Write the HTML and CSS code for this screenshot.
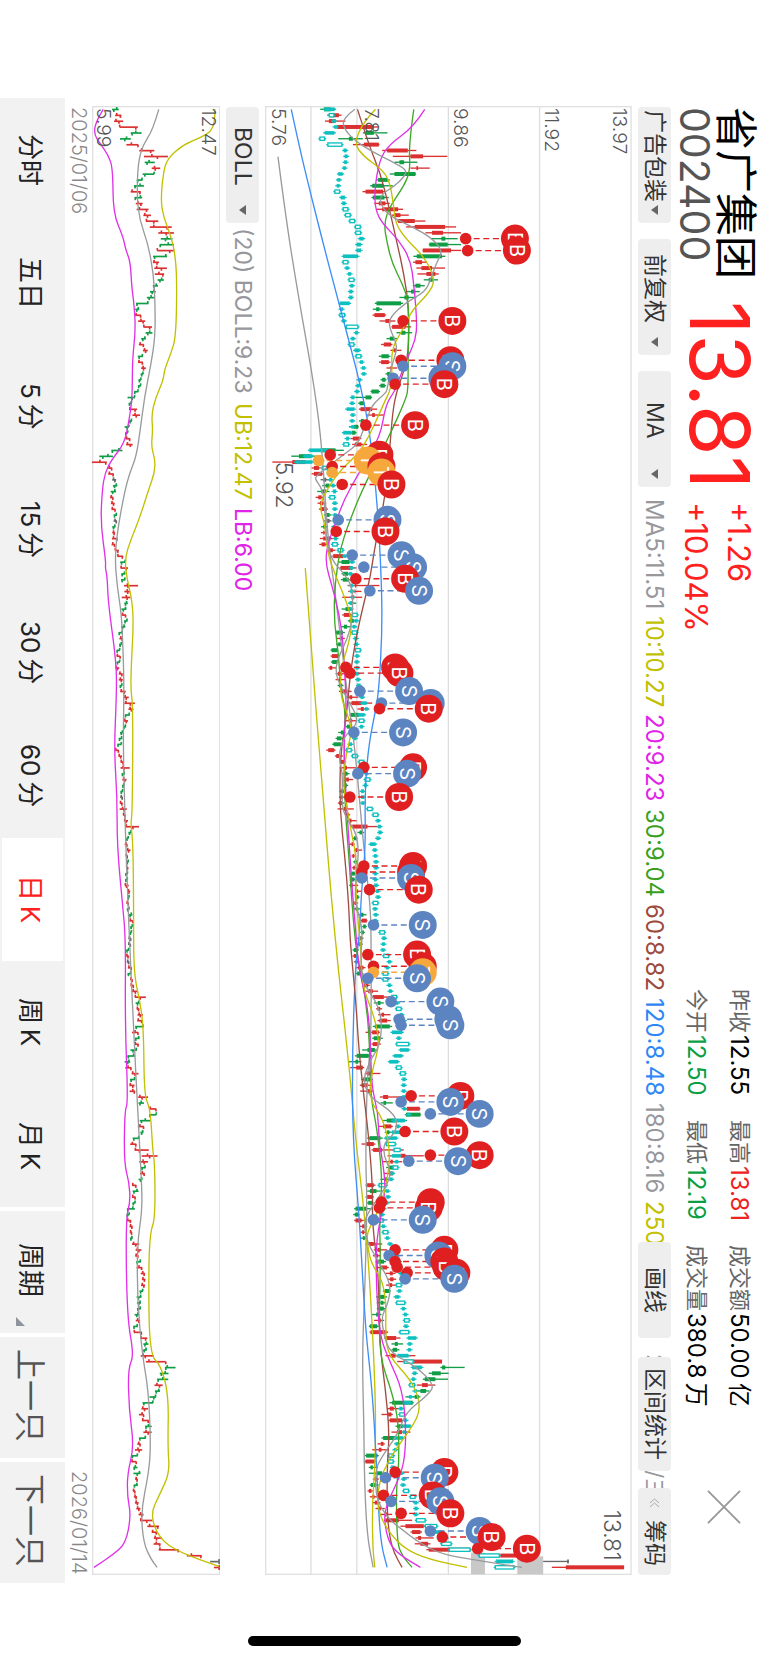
FILE: index.html
```html
<!DOCTYPE html>
<html lang="zh-CN">
<head>
<meta charset="utf-8">
<meta name="viewport" content="width=device-width, initial-scale=1">
<title>省广集团 002400</title>
<link rel="stylesheet" href="styles.css">
</head>
<body>
<main class="screen">
  <header class="quote">
    <div class="identity">
      <h1 class="name">省广集团</h1>
      <p class="code">002400</p>
    </div>
    <p class="price">13.81</p>
    <div class="change">
      <p>+1.26</p>
      <p>+10.04%</p>
    </div>
    <dl class="stats">
      <div><dt>昨收</dt><dd>12.55</dd></div>
      <div><dt>最高</dt><dd class="up">13.81</dd></div>
      <div><dt>成交额</dt><dd>50.00&thinsp;亿</dd></div>
      <div><dt>今开</dt><dd class="down">12.50</dd></div>
      <div><dt>最低</dt><dd class="down">12.19</dd></div>
      <div><dt>成交量</dt><dd>380.8&thinsp;万</dd></div>
    </dl>
    <button class="close" type="button" aria-label="关闭">
      <svg viewBox="0 0 36 36" aria-hidden="true"><path d="M1 1 35 35M35 1 1 35"/></svg>
    </button>
  </header>

  <section class="toolbar">
    <div class="picker">
      <select aria-label="行业板块"><option>广告包装</option></select>
      <svg viewBox="0 0 7 10" aria-hidden="true"><path d="M0 5 7 0V10Z"/></svg>
    </div>
    <div class="picker">
      <select aria-label="复权方式"><option>前复权</option></select>
      <svg viewBox="0 0 7 10" aria-hidden="true"><path d="M0 5 7 0V10Z"/></svg>
    </div>
    <div class="picker">
      <select aria-label="主图指标"><option>MA</option></select>
      <svg viewBox="0 0 7 10" aria-hidden="true"><path d="M0 5 7 0V10Z"/></svg>
    </div>
    <div class="legend">
      <span class="c-gray">MA5:11.51</span>
      <span class="c-olive">10:10.27</span>
      <span class="c-magenta">20:9.23</span>
      <span class="c-green">30:9.04</span>
      <span class="c-brown">60:8.82</span>
      <span class="c-blue">120:8.48</span>
      <span class="c-gray">180:8.16</span>
      <span class="c-olive">250:7.90</span>
      <span class="c-gray session">2026/01/14/三</span>
    </div>
    <div class="tools">
      <button class="tool draw" type="button">画线</button>
      <button class="tool range" type="button">区间统计</button>
      <button class="tool chips" type="button">
        <svg viewBox="0 0 11 10" aria-hidden="true"><path d="M1 5 5.500 1 10 5M1 9 5.500 5 10 9"/></svg>
        筹码
      </button>
    </div>
  </section>

  <svg class="chart main-chart" id="main-chart" viewBox="28 48 1102 4409" preserveAspectRatio="none" role="img" aria-label="日K线图"></svg>

  <section class="toolbar">
    <div class="picker">
      <select aria-label="副图指标"><option>BOLL</option></select>
      <svg viewBox="0 0 7 10" aria-hidden="true"><path d="M0 5 7 0V10Z"/></svg>
    </div>
    <div class="legend boll">
      <span class="c-gray">(20) BOLL:9.23</span>
      <span class="c-olive">UB:12.47</span>
      <span class="c-magenta">LB:6.00</span>
    </div>
  </section>

  <svg class="chart sub-chart" id="sub-chart" viewBox="276 48 388 4409" preserveAspectRatio="none" role="img" aria-label="BOLL 指标图"></svg>

  <div class="dates"><time datetime="2025-01-06">2025/01/06</time><time datetime="2026-01-14">2026/01/14</time></div>

  <nav class="periods">
    <button type="button">分时</button>
    <button type="button">五日</button>
    <button type="button">5&thinsp;分</button>
    <button type="button">15&thinsp;分</button>
    <button type="button">30&thinsp;分</button>
    <button type="button">60&thinsp;分</button>
    <button type="button" class="active" aria-current="true">日&thinsp;K</button>
    <button type="button">周&thinsp;K</button>
    <button type="button">月&thinsp;K</button>
    <button type="button" class="split more">周期<svg viewBox="0 0 9 9" aria-hidden="true"><path d="M0 0V9H9Z"/></svg></button>
    <button type="button" class="split step">上一只</button>
    <button type="button" class="split step">下一只</button>
  </nav>
</main>
<div class="home-bar"></div>
<script src="chart.js"></script>
</body>
</html>
```
FILE: styles.css
```css
* { box-sizing: border-box; margin: 0; padding: 0; }

body {
  min-height: 100vh;
  display: flex;
  flex-direction: column;
  background: #fff;
  color: #000;
  font-family: Inter, "Noto Sans CJK SC", sans-serif;
}

button, select {
  border: 0;
  background: none;
  color: inherit;
  font: inherit;
  writing-mode: vertical-rl;
  text-orientation: sideways;
}

.screen {
  flex: 1;
  min-height: 1200px;
  padding-block: 0;
  padding-inline: 98px 0;
  display: flex;
  flex-direction: column;
  writing-mode: vertical-rl;
  text-orientation: sideways;
  white-space: nowrap;
}

/* quote header */
.quote {
  flex: none;
  block-size: 97px;
  margin-inline: 9px 8px;
  display: flex;
  align-items: flex-start;
}
.identity { inline-size: 194px; padding-block-start: 12px; }
.name { font-size: 43px; line-height: 41px; font-weight: 400; }
.code { font-size: 41px; line-height: 41px; color: #555; }
.price { inline-size: 201px; padding-block-start: 8px; font-size: 82px; line-height: 82px; color: #ff2020; }
.change { padding-block-start: 7px; font-size: 31px; line-height: 43px; color: #ff2020; }
.stats {
  margin-inline-start: auto;
  padding-block-start: 7px;
  display: grid;
  grid-template-columns: auto auto auto;
  column-gap: 24px;
  font-size: 24px;
  line-height: 43px;
}
.stats div { display: flex; gap: 2px; }
.stats dt { color: #666; font-size: 22px; }
.up { color: #e22; }
.down { color: #0a9f44; }
.close { inline-size: 34px; block-size: 36px; margin-inline: 83px 51px; margin-block-start: 26px; }
.close svg { display: block; width: 36px; height: 34px; fill: none; stroke: #999; stroke-width: 2; }

/* toolbars */
.toolbar {
  position: relative;
  flex: none;
  block-size: 33px;
  margin-inline: 9px 8px;
  display: flex;
  gap: 16px;
  font-size: 23px;
  line-height: 33px;
}
.picker {
  flex: none;
  inline-size: 116px;
  display: flex;
  align-items: center;
  border-radius: 4px;
  background: #eee;
  color: #333;
}
.picker select { inline-size: 98px; block-size: 33px; appearance: none; text-align: center; }
.picker svg { width: 7px; height: 10px; fill: #666; }
.legend {
  flex: 1;
  min-inline-size: 0;
  margin-inline-start: -4px;
  overflow: hidden;
  display: flex;
  gap: 7px;
  font-size: 24px;
}
.session { margin-inline-start: 48px; font-size: 22px; }
.boll { margin-inline-start: -11px; font-size: 23px; gap: 9px; }
.tools { position: absolute; inset-block: 0; inset-inline-end: 0; display: flex; }
.tool { block-size: 33px; border-radius: 4px; background: #eee; color: #333; text-align: center; line-height: 33px; }
.draw { inline-size: 96px; margin-inline-end: 19px; }
.range { inline-size: 114px; margin-inline-end: 17px; }
.chips { inline-size: 87px; display: flex; align-items: center; justify-content: center; gap: 12px; }
.chips svg { width: 11px; height: 10px; fill: none; stroke: #aaa; }

.c-gray { color: #97979c; }
.c-olive { color: #c2c000; }
.c-magenta { color: #e024e8; }
.c-green { color: #3a9f1f; }
.c-brown { color: #9c4a3c; }
.c-blue { color: #2f86f6; }

/* charts */
.chart {
  display: block;
  min-width: 0;
  height: auto;
  margin: 8px 6px 8px;
  writing-mode: horizontal-tb;
}
.main-chart { flex: 366 1 0; }
.sub-chart { flex: 128 1 0; margin-left: 0; }
.chart text { font-family: Inter, sans-serif; }
.axis { font-size: 58px; font-weight: 300; fill: #555; }
.extreme { font-size: 68px; font-weight: 300; fill: #555; }
.tag { font-size: 60px; fill: #fff; text-anchor: middle; }
.line { fill: none; stroke-width: 4; stroke-linejoin: round; }

.dates {
  flex: none;
  block-size: 27px;
  margin-inline: 9px 8px;
  display: flex;
  justify-content: space-between;
  font-size: 20px;
  font-weight: 300;
  line-height: 27px;
  color: #888;
}

/* period tabs */
.periods { flex: none; block-size: 65px; display: flex; background: #f2f2f2; }
.periods button { flex: 123; text-align: center; font-size: 26px; color: #222; }
.periods .active { background: #f2f2f2 linear-gradient(#fff, #fff) center / 61px 100% no-repeat; color: #ff2020; }
.periods .split { position: relative; flex: 125; box-shadow: inset 0 4px #fff; }
.periods .more { font-size: 27px; }
.periods .step { font-size: 31px; color: #555; }
.more svg { position: absolute; inset-block-end: 16px; inset-inline-end: 7px; width: 9px; height: 9px; fill: #8d949c; }

.home-bar { flex: none; align-self: center; width: 273px; height: 10px; margin: 53px 0 17px; border-radius: 5px; background: #000; }
```
FILE: chart.js
```js
const RED = '#dc3030', GREEN = '#0f9d45', DARK = '#666', CYAN = '#0cc0c0';
const GRAY = '#999a9c', OLIVE = '#c2c000', MAGENTA = '#e030e8', LIME = '#3fa826', BROWN = '#a04c40', BLUE = '#3c8ef8';
const TOP = 58, STEP = 17.645;
const at = i => TOP + STEP * i;

// colour, low, body low, body high, high
const days = `g194 205 225 240,r215 225 250 258,r208 220 240 270,r245 245 355 370,g322 330 355 396,g248 280 292 322,r292 325 370 372,r380 395 457 483,r412 465 503 576,g417 432 446 486,r465 483 488 523,g403 417 480 482,g363 368 397 403,g344 350 384 412,r321 330 383 390,g348 352 387 400,r356 370 390 403,r362 380 428 443,r408 417 435 460,r425 428 478 510,r452 478 569 602,r510 530 563 617,g527 558 570 607,g520 522 577 617,r502 502 587 617,g474 484 560 570,r473 480 500 515,r483 498 530 569,r486 513 540 550,g505 520 532 548,g472 480 495 508,g453 467 480 493,g432 447 460 483,g358 363 437 443,g352 362 372 380,r351 357 388 392,r372 390 405 420,r408 410 450 467,g423 437 450 470,g393 403 417 425,r377 385 407 411,r405 415 422 438,g370 378 400 405,r371 377 400 405,r393 405 408 425,g390 395 404 408,g375 380 390 393,g371 375 388 392,g345 348 370 374,g300 330 347 350,g308 312 325 328,r310 315 350 365,r333 350 358 385,g310 316 325 330,g280 295 308 310,g284 288 300 303,r285 292 313 318,r290 298 318 335,g190 195 240 265,g107 130 165 200,r50 110 150 158,r168 175 190 195,r168 175 200 205,k195 203 212 222,g200 210 222 230,g185 197 212 222,r180 188 198 203,r186 193 203 212,r190 195 213 217,g205 210 222 228,k205 213 222 228,g196 203 212 217,r196 203 207 215,r193 203 225 232,r191 198 210 215,r213 215 232 240,r230 233 263 270,g250 258 282 288,r252 255 290 303,g258 262 278 285,g256 262 280 285,r276 298 302 372,r278 297 300 318,r260 290 296 320,g278 285 292 302,g258 270 285 292,r260 265 285 290,g277 282 295 300,g256 265 275 285,g239 242 262 268,r244 253 262 268,g242 248 256 260,g225 228 245 248,r225 229 248 250,g226 230 245 248,r218 222 230 243,r240 247 260 265,r240 250 256 268,g246 250 260 264,r250 256 275 288,r272 282 290 308,r278 288 318 350,r306 316 325 340,g282 285 310 315,r270 280 290 303,g270 274 284 290,g248 256 264 270,g240 244 258 264,g230 234 256 260,r212 218 236 240,r238 242 252 262,r252 256 268 272,r252 268 274 315,g260 264 276 282,r264 272 280 293,g262 268 274 278,g252 256 265 270,k250 256 262 268,r247 251 260 266,r246 265 275 295,r268 272 280 284,r275 280 288 303,r286 290 336 378,g306 312 322 326,g291 295 303 306,r280 288 294 298,r295 300 306 320,r288 291 296 302,g293 297 303 306,r290 293 298 306,g284 288 298 302,g283 287 297 300,r281 284 292 308,r302 305 308 318,g301 304 309 312,r292 297 304 308,g295 300 308 314,g310 316 324 333,r313 318 334 336,g320 323 331 334,g314 318 325 328,k305 312 320 324,k303 309 318 322,g291 295 306 310,r291 295 302 308,k295 300 306 312,r302 308 324 330,g300 305 320 324,r318 322 330 334,r320 325 338 343,r330 338 352 368,r350 352 385 425,g355 367 375 385,r362 366 374 380,r368 378 386 405,r366 372 395 406,g352 358 403 410,r330 350 370 373,g350 355 375 382,r348 352 370 376,g320 336 358 365,g298 304 340 350,g280 300 308 318,r284 302 322 326,r328 334 350 375,g317 323 347 352,r313 318 335 348,r314 335 345 352,r373 383 398 440,g375 384 392 412,r450 454 493 495,g448 452 495 497,g383 394 420 455,r370 383 408 412,g388 395 402 408,g335 342 375 382,r318 332 355 360,r348 353 380 445,r396 435 450 505,r380 405 412 440,g392 398 418 424,r385 400 412 418,g375 388 395 402,r330 335 355 360,g335 343 363 375,r330 335 350 355,g334 338 350 354,g296 300 335 350,g293 298 310 312,r296 300 318 325,r313 320 328 335,r315 320 326 330,g316 322 328 335,r330 340 355 380,r355 366 376 395,r352 358 368 375,g360 365 386 392,r362 377 395 400,r390 403 412 420,r398 404 414 422,r392 400 410 420,g382 388 402 406,g362 374 388 395,g364 376 384 392,g364 370 385 390,g348 362 370 378,r356 368 376 386,g340 343 365 370,r342 345 393 398,r386 390 422 435,g408 418 427 443,g408 412 425 432,r390 405 420 480,r425 445 560 560,g555 560 570 628,g520 530 556 580,g502 508 540 578,r484 500 517 540,g487 495 512 522,g450 478 490 495,g402 410 472 475,r395 403 415 440,r378 398 408 412,r398 403 440 445,g420 425 442 465,r408 425 440 465,g378 383 420 425,r366 376 384 388,r350 370 378 400,g328 332 366 370,r325 330 358 360,g340 345 352 368,g340 365 380 388,r352 358 364 370,g342 346 362 370,r336 340 348 352,r343 350 357 365,r350 358 366 375,r360 368 376 388,r375 388 396 410,r385 390 430 470,r435 450 505 515,r465 470 495 500,r480 488 497 535,r478 495 518 525,r513 520 645 648,r705 735 800 805,k864 936 941 941,r890 932 1107 1107`
  .split(',').map(s => ({ c: { r: RED, g: GREEN, k: DARK }[s[0]], v: s.slice(1).split(' ').map(Number) }));

// comparison index, keyed by first session of each run: centre, optional :half length, h = hollow body
const index = {
  0: '222:15,228h,235,240,222:14,200h,238:21h,269,272,270,267,255:6,250,248,245h,262:6,265,270h,277h,290h,307h,308h,318:6,310:6,310:6',
  25: '285:22,270h,275,282,288h,289,286,286',
  33: '268:14,258,260h,265,290:17h,303,292,288h,305:7,309h,318,324,325,312,308',
  48: '305,292,290,285:11,292,290,292,275:11,276,272h',
  58: '190:28,158:12,145:25,207h,222,225,233,237,230h,238,238,239,240,236,238,240,238h,255h,268,290,288,285',
  80: '290,288,289,291,287,285,298h,302,296,297h,301,303,307h,305,304,305,305,308,310,322,320,325:8,333,318:9,318h,318',
  107: '298,285,280h,298h,318h,325,333,336h,330,321,322,322,343h,360h,368,372,374,368,352:8,358,360,362,362,360,360,362,366',
  134: '368,360h,359,361,360,362,380h,386,384,383,392h,402,396,390h,390h,402,405,416h,425,430h,438,445',
  156: '437,425:15,430,442:18h,447:13,428:12,415:13,430h,442h,446,445,445,445,440,447',
  171: '460,430:18,428,422:12,407:17,406:13h,425:9h,422:12,424,420h,410,407,382:11h,396,398,394,384,380',
  189: '376h,384,390h,396,404,412,425,431,434,437,440,430h,432,425:6,436:12h,444,450,454h,452,447:13h,470:12,463,462,443:16,460:13h,485:14,478,474,470h',
  218: '480,465,457:9,437,440h,450,455:10,447,430:13,425,420,407h,406h,412,438,445,443,452h,472h,481,482,481,496:13h,527:17h,550:14,565:10,573:14h,613:31h,702:30h,748:25,748:28h'
};

// trade marks: kind, pin value, session position
const trades = `B631 446,B637 482,B443 693,B437 811,S443 829,S413 865,B419 883,B331 1006,B224 1095,T189 1112,B230 1130,T230 1148,B260 1184,S248 1290,B242 1325,S290 1396,S325 1432,B301 1467,S343 1503,B271 1733,B284 1750,S378 1840,S313 1804,B372 1857,S295 1928,B325 2033,S307 2052,B283 2122,B325 2329,B319 2347,S319 2365,B342 2400,S354 2506,B337 2595,B354 2630,T354 2648,S337 2666,S407 2736,S431 2789,S437 2807,B467 3019,S437 3037,S525 3073,B449 3126,B525 3197,S460 3215,B378 3338,B372 3355,S354 3391,B419 3481,S401 3498,B419 3516,B425 3533,B455 3550,S449 3568,B419 4148,S390 4165,B384 4218,S407 4236,B437 4272,S525 4325,B561 4343,B667 4378`
  .split(',').map(s => [s[0], ...s.slice(1).split(' ').map(Number)]);

const mainLines = [
  [GRAY, '67 200 90 380 125 600 178 900 200 1080 215 1330 240 1520 262 1700 280 1850 300 1990 325 2280 345 2450 347 2560 347 2860 335 2960 330 3200 335 3340 328 3600 320 3800 325 4000 327 4180 335 4340 353 4434'],
  [OLIVE, '149 1435 165 1650 200 2100 238 2550 280 2920 300 3150 320 3310 340 3520 360 3900 360 4110 350 4250 352 4380 358 4434'],
  [BLUE, '107 58 130 165 160 290 200 450 250 640 290 790 318 900 342 1020 365 1230 378 1470 380 1620 372 1770 365 1840 340 1960 328 2100 330 2280 318 2400 312 2540 300 2620 290 2900 292 3150 310 3370 318 3500 330 3720 350 3900 362 4100 370 4280 378 4370 395 4434'],
  [BROWN, '306 58 340 165 375 250 400 350 425 460 445 550 460 650 460 790 440 860 425 900 412 960 402 1090 388 1230 358 1370 345 1460 325 1540 300 1650 285 1750 280 1800 270 1900 255 1990 252 2150 268 2300 280 2450 284 2560 300 2720 310 2880 325 3020 342 3160 352 3310 350 3400 370 3560 372 3760 390 3900 402 4030 395 4130 395 4270 402 4340 415 4390 440 4434'],
  [LIME, '475 58 460 165 465 240 445 290 405 345 385 400 395 460 410 520 440 580 458 630 460 700 458 800 458 900 450 930 410 1020 375 1090 330 1180 295 1260 255 1370 238 1480 235 1590 250 1700 255 1800 270 1860 265 1950 268 2150 280 2300 290 2450 298 2540 305 2600 330 2720 342 2850 345 3020 365 3120 378 3240 378 3310 372 3400 375 3500 372 3650 372 3800 410 3910 430 4000 430 4140 422 4200 425 4360 440 4400 470 4434'],
  [MAGENTA, '508 58 475 110 400 165 372 210 357 300 360 360 380 400 430 450 465 510 475 580 485 700 480 750 458 800 430 870 420 900 390 945 375 1040 310 1150 265 1230 240 1300 220 1350 208 1415 230 1490 250 1570 262 1650 270 1790 272 1850 265 1950 270 2100 280 2250 290 2400 302 2540 310 2640 335 2740 345 2850 348 2990 368 3070 370 3150 390 3270 385 3340 362 3450 362 3580 372 3740 405 3820 440 3900 452 4010 448 4110 430 4170 395 4240 385 4290 400 4360 430 4395 495 4434'],
  [OLIVE, '360 58 325 95 295 160 325 200 375 235 402 270 415 350 420 400 450 445 510 505 540 570 520 610 470 660 445 715 408 775 410 850 405 900 390 930 370 975 340 1040 310 1090 255 1140 220 1190 190 1245 210 1310 215 1390 245 1470 275 1540 290 1600 280 1660 255 1740 255 1820 275 1870 290 1925 270 2000 262 2080 275 2160 290 2240 302 2300 300 2400 310 2520 315 2570 320 2690 360 2790 372 2870 350 2940 340 3030 385 3090 405 3190 395 3275 375 3350 345 3410 332 3440 345 3520 380 3570 392 3640 390 3740 400 3800 465 3870 492 3930 490 3980 450 4040 400 4110 370 4180 365 4260 400 4330 450 4380 520 4410 635 4434'],
  [GRAY, '298 58 262 85 265 115 295 150 350 185 410 215 455 240 445 262 415 290 375 315 375 345 405 380 470 410 530 445 562 483 545 515 525 570 510 605 455 635 405 680 400 710 425 765 420 795 405 840 395 900 390 910 350 945 335 985 310 1060 270 1090 230 1120 180 1160 180 1170 195 1190 205 1220 210 1300 215 1370 235 1420 265 1450 290 1490 292 1560 285 1620 265 1670 245 1710 240 1750 255 1790 285 1845 305 1880 300 1910 265 1940 248 2000 262 2050 258 2150 275 2190 300 2225 310 2280 303 2350 298 2420 305 2460 322 2520 315 2600 322 2680 365 2740 380 2800 372 2870 345 2910 322 2970 340 3020 400 3060 425 3090 420 3130 385 3160 385 3200 405 3240 400 3280 340 3365 325 3400 335 3460 375 3525 408 3590 395 3650 378 3680 385 3740 405 3790 480 3830 537 3885 520 3915 450 3970 430 4030 370 4115 360 4150 362 4230 400 4290 440 4320 490 4360 560 4395 650 4410 740 4425 800 4434']
];

const bollLines = [
  [GRAY, '478 58 460 120 430 165 415 220 412 320 420 390 445 460 462 550 467 640 467 740 455 820 435 920 422 1020 410 1100 390 1150 376 1200 355 1310 345 1400 352 1490 365 1570 370 1680 373 1800 370 1960 376 2200 385 2450 390 2560 402 2827 415 3075 427 3297 427 3366 413 3463 413 3629 428 3795 447 3905 454 4071 447 4154 424 4265 432 4362 455 4410 473 4434'],
  [OLIVE, '648 58 648 95 635 125 610 140 550 165 505 205 492 245 484 330 492 380 515 440 527 490 533 570 530 740 515 790 495 840 492 870 468 925 456 975 460 1020 455 1070 467 1110 465 1150 447 1200 420 1285 395 1345 375 1405 382 1470 395 1520 402 1590 395 1720 393 1800 400 1850 398 2170 393 2200 400 2260 402 2450 402 2650 420 2730 432 2813 434 3020 452 3055 460 3186 466 3228 467 3387 452 3428 447 3546 450 3795 485 3829 508 3919 505 4071 511 4151 480 4216 452 4276 480 4348 540 4389 660 4431'],
  [MAGENTA, '310 58 290 90 281 130 300 160 325 195 339 235 340 370 370 440 378 480 392 515 396 590 403 640 408 720 398 810 398 920 390 980 375 1060 335 1110 315 1150 307 1200 302 1300 318 1415 316 1435 322 1460 325 1540 350 1720 350 1820 343 1980 352 2120 352 2270 368 2440 378 2550 376 2799 385 3041 375 3062 373 3221 388 3276 392 3338 378 3387 382 3684 403 3799 385 3836 388 3961 403 4071 383 4154 383 4223 394 4279 378 4362 340 4396 282 4434']
];

const rect = (x, y, w, h, c) => `<rect x="${x}" y="${y}" width="${w}" height="${h}" fill="${c}"/>`;
const frame = (x, w) => `<rect x="${x}" y="50" width="${w}" height="4405" fill="none" stroke="#e0e0e0" stroke-width="4"/>`;
const label = (x, y, t, cls) => `<text class="${cls}" transform="translate(${x} ${y}) rotate(90)">${t}</text>`;

// quadratic segments through midpoints give a smooth average line
function line([color, data]) {
  const n = data.split(' ').map(Number);
  let d = `M${n[0]} ${n[1]}`;
  for (let i = 2; i < n.length - 2; i += 2) {
    d += `Q${n[i]} ${n[i + 1]} ${(n[i] + n[i + 2]) / 2} ${(n[i + 1] + n[i + 3]) / 2}`;
  }
  d += `L${n[n.length - 2]} ${n[n.length - 1]}`;
  return `<path class="line" d="${d}" stroke="${color}"/>`;
}

function indexBar(token, i) {
  const hollow = token.endsWith('h');
  const [mid, size] = token.replace('h', '').split(':').map(Number);
  const half = size || (hollow ? 7 : 4);
  return rect(mid - half - 5, at(i) - 2, half * 2 + 10, 4, CYAN)
    + `<rect x="${mid - half}" y="${at(i) - 5}" width="${half * 2}" height="10" fill="${hollow ? '#fff' : CYAN}" stroke="${CYAN}" stroke-width="${hollow ? 4 : 1}"/>`;
}

function drawMain() {
  let out = frame(30, 1098);
  for (const x of [166, 304, 579, 853]) out += rect(x - 2, 50, 4, 4405, '#dedede');
  out += rect(647, 4390, 42, 65, '#c8c8c8') + rect(786, 4401, 78, 54, '#c8c8c8');
  days.forEach(({ c, v }, i) => {
    out += rect(v[0], at(i) - 2, v[3] - v[0], 4, c) + rect(v[1], at(i) - 6, v[2] - v[1], 12, c);
  });
  for (const [start, run] of Object.entries(index)) {
    run.split(',').forEach((token, k) => { out += indexBar(token, Number(start) + k); });
  }
  out += mainLines.map(line).join('');
  [['5.76', 48], ['7.81', 328], ['9.86', 597], ['11.92', 870], ['13.97', 1075]].forEach(([t, x]) => { out += label(x, 54, t, 'axis'); });
  out += label(62, 1116, '5.92', 'extreme') + label(1048, 4262, '13.81', 'extreme');
  const tone = { B: '#e02020', S: '#5b84c1', T: '#f7a83c' };
  for (const [k, x, y] of trades) {
    out += `<path d="M${x + 24} ${y}H${x + 106}" stroke="${tone[k]}" stroke-width="4" stroke-dasharray="18 11"/>`;
  }
  for (const [k, x, y] of trades) {
    out += `<circle cx="${x}" cy="${y}" r="17.500" fill="${tone[k]}"/>`;
    out += `<circle cx="${x + 148}" cy="${y}" r="42" fill="${tone[k]}"/>${label(x + 126, y, k, 'tag')}`;
  }
  document.getElementById('main-chart').innerHTML = out;
}

function drawBoll() {
  const scale = u => Math.min(660, 264 + (u - 30) * 0.4428);
  let out = frame(278, 384);
  days.forEach(({ c, v }, i) => {
    const [low, a, b, high] = v.map(scale);
    const [open, close] = c === GREEN ? [b, a] : [a, b];
    out += rect(low, at(i) - 2, Math.max(5, high - low), 5, c);
    out += rect(open - 2, at(i) - 7, 5, 7, c) + rect(close - 2, at(i), 5, 8, c);
  });
  out += bollLines.map(line).join('');
  out += label(292, 54, '5.99', 'axis') + label(609, 54, '12.47', 'axis');
  document.getElementById('sub-chart').innerHTML = out;
}

drawMain();
drawBoll();
```
